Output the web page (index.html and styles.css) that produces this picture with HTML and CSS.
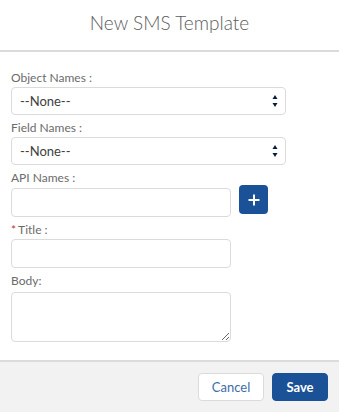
FILE: index.html
```html
<!DOCTYPE html>
<html lang="en">
<head>
    <meta charset="UTF-8" />
    <meta name="viewport" content="width=device-width, initial-scale=1.0" />
    <title>New SMS Template</title>
    <link rel="stylesheet" href="styles.css">
</head>
<body>
    <div class="modal">
        <header class="modal-header">
            <h2>New SMS Template</h2>
        </header>

        <div class="modal-body">
            <div class="form-group">
                <label for="object-name">Object Names :</label>
                <div class="select-wrap">
                    <select id="object-name">
                        <option>--None--</option>
                    </select>
                    <svg class="select-arrows" width="6" height="14" viewBox="0 0 6 14">
                        <path d="M3 1 L5.5 5 L0.5 5 Z" fill="#061c3f" />
                        <path d="M3 13 L5.5 9 L0.5 9 Z" fill="#061c3f" />
                    </svg>
                </div>
            </div>

            <div class="form-group">
                <label for="field-name">Field Names :</label>
                <div class="select-wrap">
                    <select id="field-name">
                        <option>--None--</option>
                    </select>
                    <svg class="select-arrows" width="6" height="14" viewBox="0 0 6 14">
                        <path d="M3 1 L5.5 5 L0.5 5 Z" fill="#061c3f" />
                        <path d="M3 13 L5.5 9 L0.5 9 Z" fill="#061c3f" />
                    </svg>
                </div>
            </div>

            <div class="form-group">
                <label for="api-name">API Names :</label>
                <div class="api-row">
                    <input type="text" id="api-name" class="text-input" />
                    <button type="button" class="add-btn" title="Add">
                        <svg width="14" height="14" viewBox="0 0 14 14">
                            <path d="M7 1.5 V12.5 M1.5 7 H12.5" stroke="#fff" stroke-width="2" />
                        </svg>
                    </button>
                </div>
            </div>

            <div class="form-group">
                <label for="title"><abbr class="required">*</abbr>Title :</label>
                <input type="text" id="title" class="text-input" />
            </div>

            <div class="form-group">
                <label for="body">Body:</label>
                <textarea id="body" class="text-area"></textarea>
            </div>
        </div>

        <footer class="modal-footer">
            <button type="button" class="btn btn-neutral">Cancel</button>
            <button type="button" class="btn btn-brand">Save</button>
        </footer>
    </div>
</body>
</html>
```

FILE: styles.css
```css
body {
    font-family: Lato, "Open Sans", Arial, sans-serif;
    background-color: #ffffff;
    margin: 0;
    padding: 0;
}

.modal {
    width: 339px;
    height: 412px;
    display: flex;
    flex-direction: column;
    background-color: #ffffff;
}

.modal-header {
    height: 50px;
    border-bottom: 2px solid #dddbda;
    display: flex;
    align-items: center;
    justify-content: center;
}

.modal-header h2 {
    margin: 0 0 6px;
    font-size: 19px;
    font-weight: 300;
    color: #5c5c5c;
}

.modal-body {
    flex: 1;
    padding: 17px 11px 0;
}

.form-group {
    margin-bottom: 4px;
}

.form-group label {
    display: block;
    font-size: 12px;
    line-height: 18px;
    color: #6b6b6b;
}

.required {
    color: #c23934;
    text-decoration: none;
    margin-right: 2px;
}

.select-wrap {
    position: relative;
    width: 275px;
}

.select-wrap select {
    width: 100%;
    height: 28px;
    padding: 0 24px 0 8px;
    font-family: inherit;
    font-size: 13px;
    color: #3e3e3c;
    background-color: #ffffff;
    border: 1px solid #dddbda;
    border-radius: 4px;
    appearance: none;
    -webkit-appearance: none;
}

.select-arrows {
    position: absolute;
    right: 8px;
    top: 7px;
    pointer-events: none;
}

.api-row {
    display: flex;
    align-items: flex-start;
    gap: 8px;
}

.api-row .text-input {
    margin-top: 1px;
}

.text-input {
    box-sizing: border-box;
    width: 220px;
    height: 29px;
    padding: 0 8px;
    font-family: inherit;
    font-size: 13px;
    border: 1px solid #dddbda;
    border-radius: 4px;
}

.add-btn {
    width: 29px;
    height: 29px;
    margin-top: -2px;
    padding: 0;
    display: flex;
    align-items: center;
    justify-content: center;
    background-color: #1b5297;
    border: none;
    border-radius: 4px;
    cursor: pointer;
}

.text-area {
    display: block;
    box-sizing: border-box;
    width: 220px;
    height: 50px;
    margin-top: 2px;
    padding: 6px 8px;
    font-family: inherit;
    font-size: 13px;
    border: 1px solid #dddbda;
    border-radius: 4px;
}

.modal-footer {
    height: 52px;
    border-top: 2px solid #dddbda;
    background-color: #f3f2f2;
    display: flex;
    justify-content: flex-end;
    align-items: flex-start;
    gap: 8px;
    padding: 11px 11px 0 0;
    box-sizing: border-box;
}

.btn {
    height: 28px;
    padding: 0 12px;
    font-family: inherit;
    font-size: 13px;
    border-radius: 4px;
    cursor: pointer;
}

.btn-neutral {
    width: 66px;
    background-color: #ffffff;
    border: 1px solid #dddbda;
    color: #3b6ea8;
}

.btn-brand {
    width: 56px;
    background-color: #1b5297;
    border: 1px solid #1b5297;
    color: #ffffff;
    font-weight: 700;
}
```
